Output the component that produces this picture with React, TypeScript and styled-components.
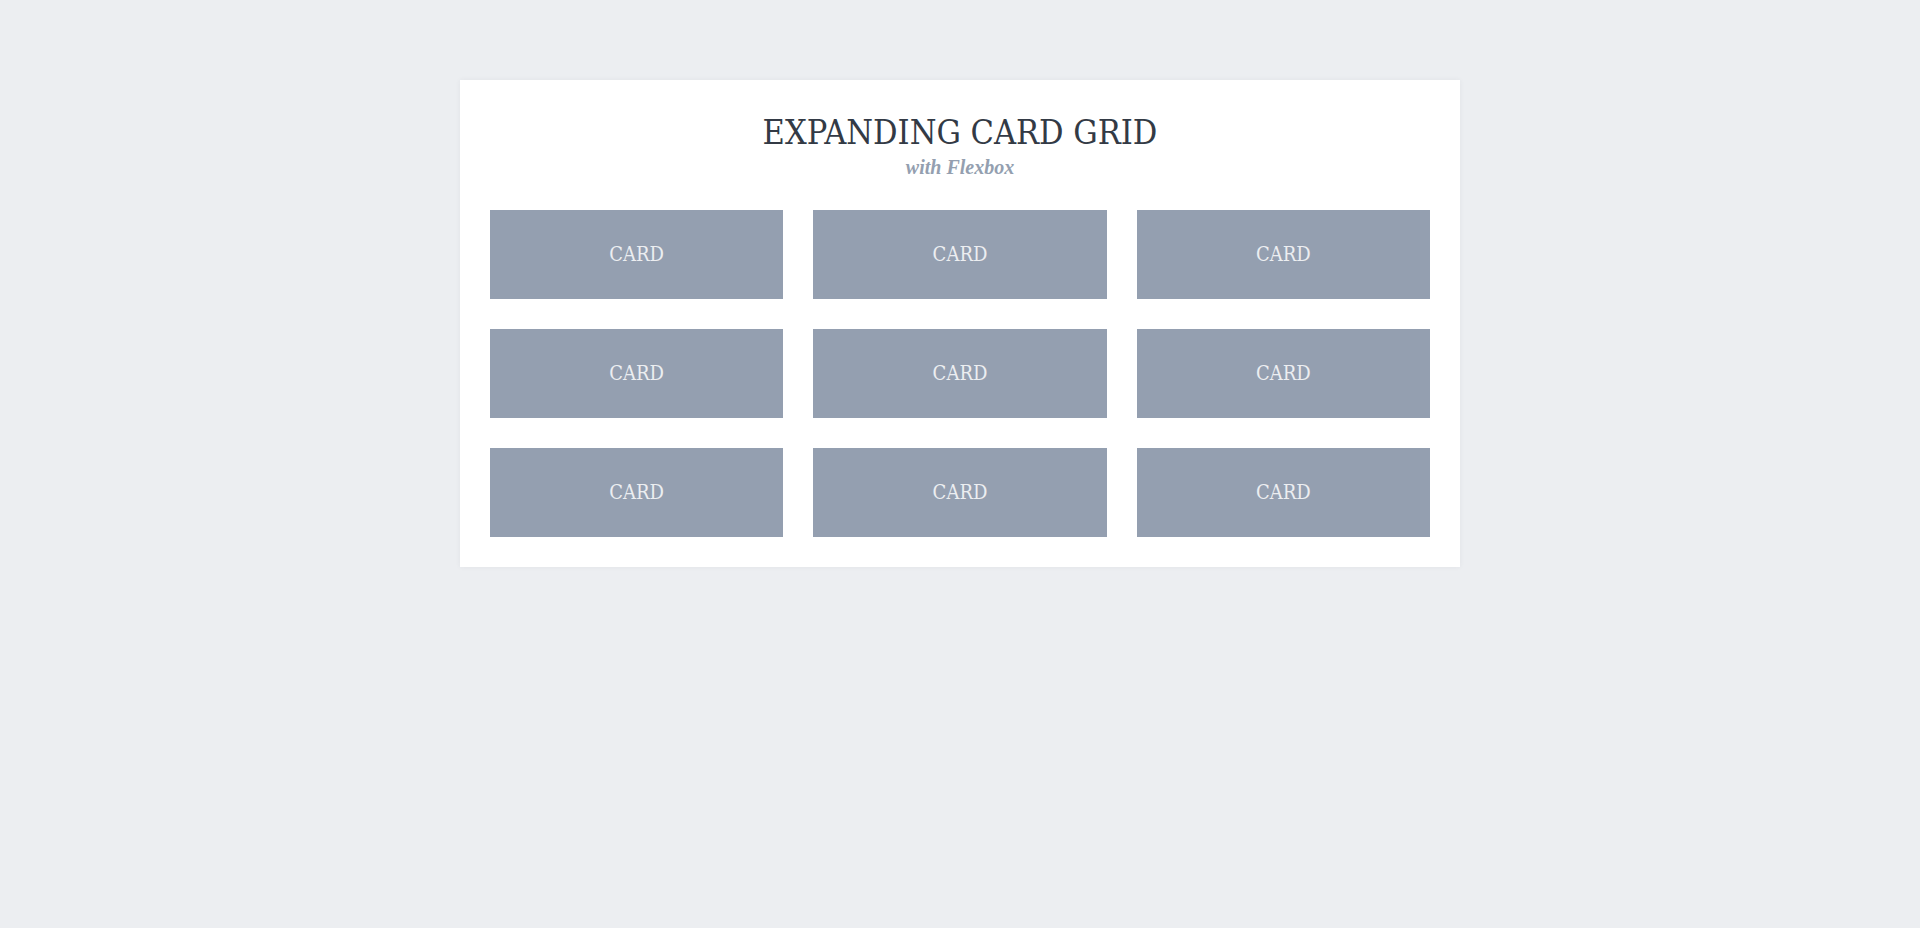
import React, { useState } from "react";
import styled, { createGlobalStyle } from "styled-components";

const GlobalStyle = createGlobalStyle`
  *, *::before, *::after { box-sizing: border-box; }
  body {
    margin: 0;
    background: #eceef1;
    color: #333a45;
    font-family: "DejaVu Serif Condensed", "DejaVu Serif", serif;
  }
`;

const Page = styled.div`
  padding: 80px 20px;
`;

const Wrapper = styled.main`
  max-width: 1000px;
  margin: 0 auto;
  padding: 30px;
  background: #ffffff;
  box-shadow: 0 0 5px rgba(51, 58, 69, 0.06);
`;

const Header = styled.header`
  margin-bottom: 30px;
  text-align: center;
  text-transform: uppercase;
`;

const Title = styled.h1`
  margin: 0;
  font-size: 34px;
  line-height: 44px;
  font-weight: 400;
`;

const Subtitle = styled.p`
  margin: 0;
  color: #949fb0;
  font-family: "Liberation Serif", serif;
  font-size: 20px;
  line-height: 26px;
  font-style: italic;
  font-weight: 700;
  text-transform: none;
`;

const Cards = styled.div`
  display: grid;
  grid-template-columns: repeat(3, 1fr);
  gap: 30px;

  @media (max-width: 767px) {
    grid-template-columns: 1fr;
  }
`;

const Card = styled.button<{ $open: boolean }>`
  display: block;
  width: 100%;
  padding: 30px;
  border: 0;
  background: ${({ $open }) => ($open ? "#6d7b90" : "#949fb0")};
  color: #eceef1;
  font-family: inherit;
  font-size: 20px;
  line-height: 29px;
  text-align: center;
  text-transform: uppercase;
  cursor: pointer;
`;

const CARD_COUNT = 9;

export default function App() {
  const [active, setActive] = useState<number | null>(null);

  return (
    <>
      <GlobalStyle />
      <Page>
        <Wrapper>
          <Header>
            <Title>Expanding Card Grid</Title>
            <Subtitle>with Flexbox</Subtitle>
          </Header>
          <Cards>
            {Array.from({ length: CARD_COUNT }, (_, i) => (
              <Card
                key={i}
                type="button"
                $open={active === i}
                aria-pressed={active === i}
                onClick={() => setActive(active === i ? null : i)}
              >
                Card
              </Card>
            ))}
          </Cards>
        </Wrapper>
      </Page>
    </>
  );
}
